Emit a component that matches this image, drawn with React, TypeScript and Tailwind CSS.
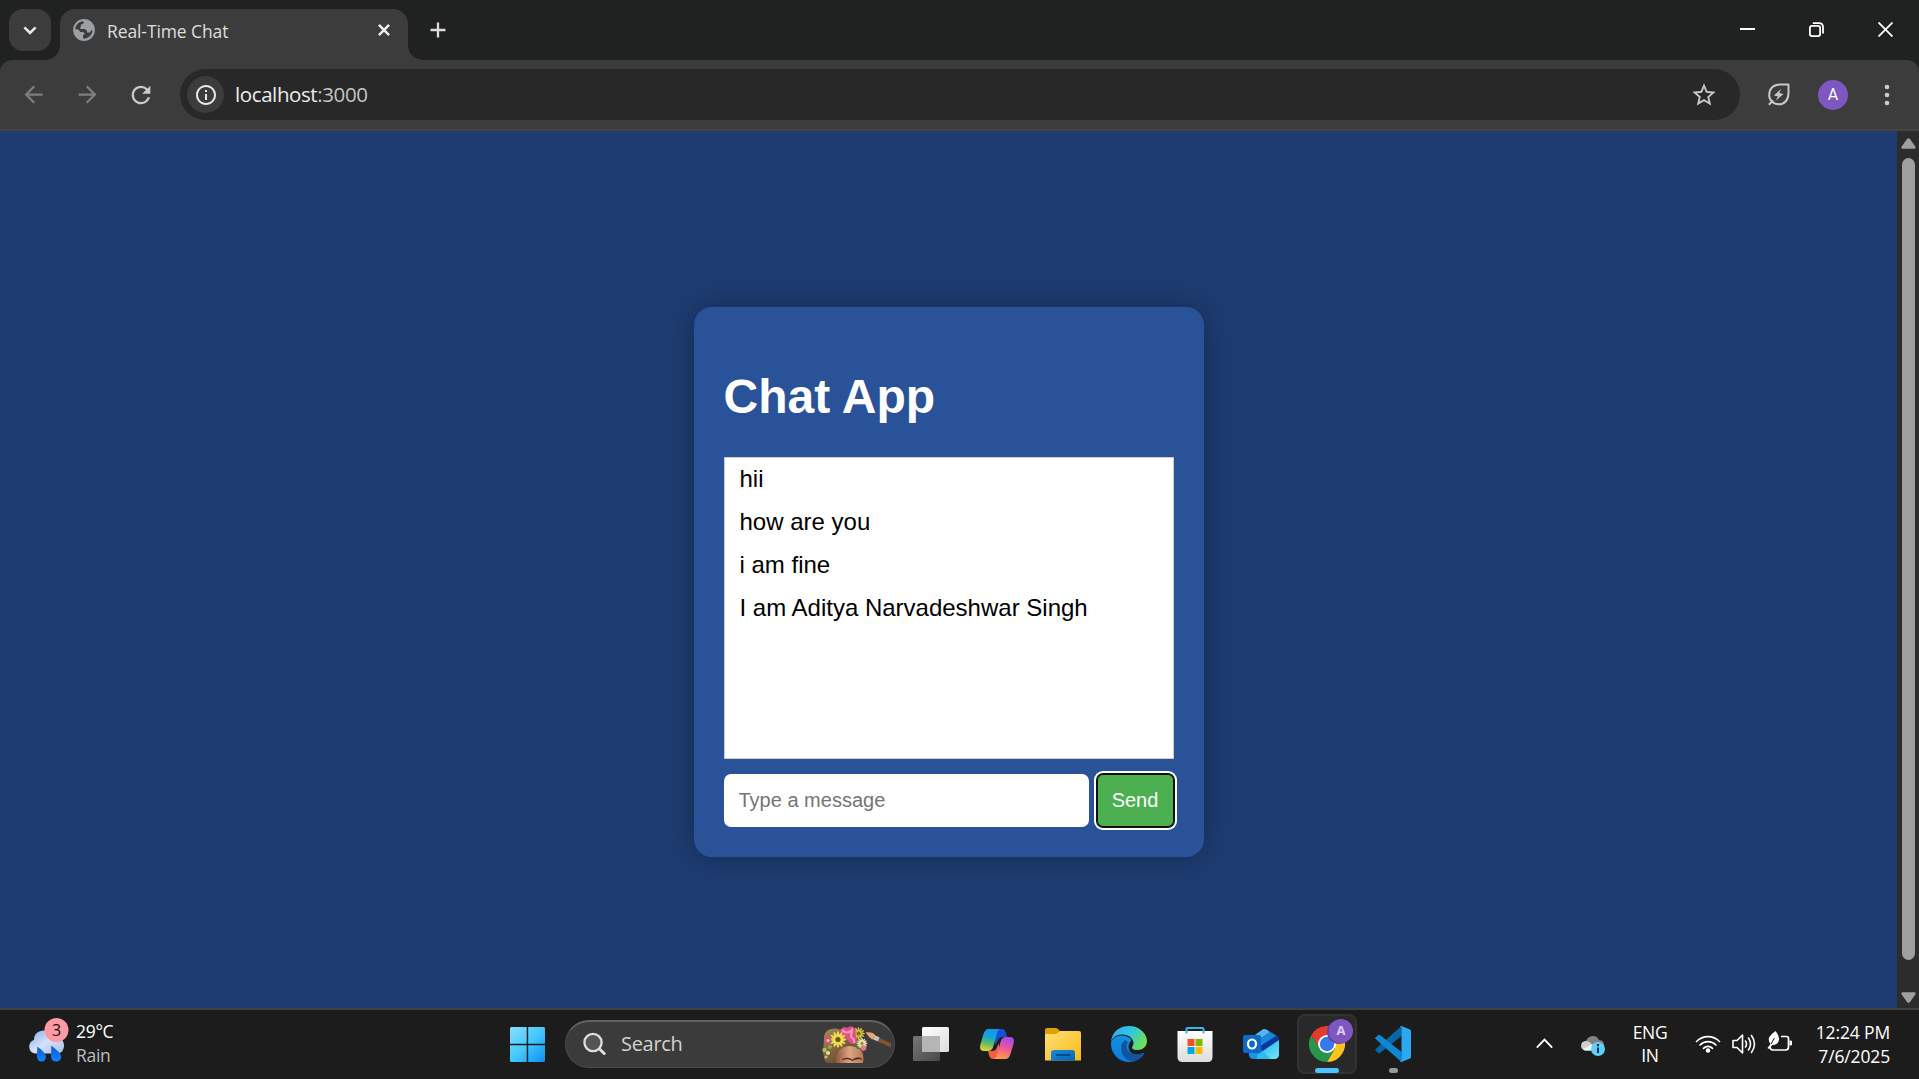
import React from "react";
import type { ReactNode } from "react";
import { MdArrowBack, MdArrowForward, MdInfoOutline, MdRefresh, MdStarOutline } from "react-icons/md";

const messages = ["hii", "how are you", "i am fine", "I am Aditya Narvadeshwar Singh"];

function GlobeIcon() {
  return (
    <svg className="mt-[2px] ml-[2px]" width="22" height="22" viewBox="0 0 22 22">
      <circle cx="11" cy="11" r="10.900" fill="#9aa0a6" />
      <path d="M2.300 10.500C2.300 6.500 5.500 2.800 10 2.300L11 3.500 9.500 5.200H8v2.300L6.800 8.700l1.200 1.300h4l2 1.800v1.700h2.800l1.500-2.200 1.300.5C19 16 15.500 19.300 11.500 19.700l-1.500-.8v-2.400l1.800-1.700-1.600-1.900H7.500L5 10.200Z" fill="#3c3c3c" />
    </svg>
  );
}

function LeafBoltIcon() {
  return (
    <svg className="ml-[28px]" width="22" height="23" viewBox="0 0 22 23" fill="none" stroke="#c8c8c8" strokeWidth="2">
      <path d="M20.500 1.500v8.500c0 7-4 11.300-9.600 11.300-5.700 0-9.700-4-9.700-9.400C1.200 5.500 5.500 1.500 12 1.500Z" strokeLinejoin="round" />
      <path d="m.8 21.800 4.500-4.300" />
      <path d="M13.200 5.800 5.800 12.600l4 .7-2 4.300 7.700-6.700-4.200-.8Z" fill="#c8c8c8" stroke="none" />
    </svg>
  );
}

function TabStrip() {
  return (
    <div className="flex h-[60px] shrink-0 bg-[#202221]">
      <button className="mt-[9px] ml-[9px] flex size-[42px] items-center justify-center rounded-[14px] bg-[#3c3c3c]">
        <svg width="14" height="9" viewBox="0 0 14 9" fill="none" stroke="#e8e8e8" strokeWidth="2.6">
          <path d="M1.4 1.4 7 7l5.6-5.6" />
        </svg>
      </button>
      <div className="relative mt-[9px] ml-[9px] flex h-[51px] w-[348px] items-start rounded-t-[15px] bg-[#3c3c3c] pt-[8px] pl-[11px]">
        <svg className="absolute bottom-0 -left-[15px]" width="15" height="15" fill="#3c3c3c">
          <path d="M15 0v15H0A15 15 0 0 0 15 0Z" />
        </svg>
        <svg className="absolute -right-[15px] bottom-0" width="15" height="15" fill="#3c3c3c">
          <path d="M0 0v15h15A15 15 0 0 1 0 0Z" />
        </svg>
        <GlobeIcon />
        <span className="ml-[12px] h-[30px] text-[17.5px] leading-[29px] tracking-[-0.1px] whitespace-nowrap text-[#dedede]">
          Real-Time Chat
        </span>
        <svg className="mt-[7px] mr-[18px] ml-auto" width="12" height="12" stroke="#f0f0f0" strokeWidth="2.5">
          <path d="m.9.9 10.2 10.2M11.1.9.9 11.1" />
        </svg>
      </div>
      <svg className="mt-[22px] ml-[22px]" width="16" height="16" stroke="#dcdcdc" strokeWidth="2.3">
        <path d="M8 .5v15M.5 8h15" />
      </svg>
      <div className="mt-[22px] mr-[26px] ml-auto flex items-start gap-[54px]">
        <svg width="15" height="15" stroke="#fff" strokeWidth="2">
          <path d="M0 7h15" />
        </svg>
        <svg width="15" height="15" fill="none" stroke="#fff" strokeWidth="1.8">
          <rect x=".9" y="3.9" width="10.2" height="10.2" rx="2" />
          <path d="M3.8 1.2h6.2q4 0 4 4v6.2" />
        </svg>
        <svg width="15" height="15" stroke="#fff" strokeWidth="1.8">
          <path d="m.5.5 14 14M14.5.5l-14 14" />
        </svg>
      </div>
    </div>
  );
}

function Toolbar() {
  return (
    <div className="shrink-0 bg-[#202221]">
      <div className="flex h-[71px] items-center rounded-t-[12px] border-b-2 border-[#444] bg-[#3c3c3c]">
        <div className="ml-[20px] flex items-center gap-[27px]">
          <MdArrowBack size={27} color="#7e7e7e" />
          <MdArrowForward size={27} color="#7e7e7e" />
          <MdRefresh className="-ml-px" size={28} color="#cacaca" />
        </div>
        <div className="ml-[25px] flex h-[51px] w-[1560px] items-center rounded-full bg-[#282828] pr-[22px] pl-[7px]">
          <div className="flex size-[37px] items-center justify-center rounded-full bg-[#3c3c3c]">
            <MdInfoOutline size={24} color="#e8e8e8" />
          </div>
          <span className="-mt-[2px] ml-[11px] text-[20.5px] leading-[28px] tracking-[-0.4px] text-[#ececec]">
            localhost<span className="text-[#c4c4c4]">:3000</span>
          </span>
          <MdStarOutline className="ml-auto" size={28} color="#c8c8c8" />
        </div>
        <LeafBoltIcon />
        <div className="ml-[28px] flex size-[30px] items-center justify-center rounded-full bg-[#7e57c2] font-[Roboto] text-[16px] text-white">
          A
        </div>
        <svg className="ml-[36px]" width="6" height="22" fill="#cacaca">
          <circle cx="3" cy="3" r="2.3" />
          <circle cx="3" cy="11" r="2.3" />
          <circle cx="3" cy="19" r="2.3" />
        </svg>
      </div>
    </div>
  );
}

function ChatCard() {
  return (
    <div className="h-[550px] w-[510px] rounded-[18px] bg-[#2a5298] p-[30px] font-['Liberation_Sans',Arial,sans-serif] shadow-[0_0_30px_rgba(0,0,0,0.3)]">
      <h1 className="pt-[32px] text-[48px] leading-[55px] font-bold text-white">Chat App</h1>
      <ul className="mt-[33px] h-[302px] border border-[#ccc] bg-white px-[15px] pt-[7px] text-[24px] text-black">
        {messages.map((text) => (
          <li key={text} className="mb-[15px] leading-[28px]">
            {text}
          </li>
        ))}
      </ul>
      <div className="mt-[15px] flex h-[53px] gap-[8px] text-[20px]">
        <input
          className="w-[365px] rounded-[7px] bg-white px-[15px] pb-[2px] placeholder:text-[#757575]"
          placeholder="Type a message"
        />
        <button className="w-[77px] rounded-[6px] bg-[#4caf50] pb-[2px] text-white shadow-[inset_0_0_0_1px_#101010,0_0_0_1px_#101010,0_0_0_3px_#fff]">
          Send
        </button>
      </div>
    </div>
  );
}

function Scrollbar() {
  return (
    <div className="flex w-[22px] shrink-0 flex-col items-center bg-[#2c2c2c]">
      <svg className="mt-[7px]" width="15" height="11" fill="#9f9f9f">
        <path d="M6.2.8q1.3-1.2 2.6 0l5.5 7.7q1 2.2-1 2.2H1.7q-2 0-1-2.2Z" />
      </svg>
      <div className="mt-[9px] h-[802px] w-[13px] rounded-full bg-[#9f9f9f]" />
      <svg className="mt-auto mb-[5px]" width="15" height="11" fill="#9f9f9f">
        <path d="M6.2 10.2q1.3 1.2 2.6 0l5.5-7.7q1-2.2-1-2.2H1.7q-2 0-1 2.2Z" />
      </svg>
    </div>
  );
}

function WeatherIcon() {
  return (
    <svg width="42" height="46" viewBox="0 0 42 46">
      <defs>
        <linearGradient id="cloud" x1="0" y1="0" x2="1" y2="1">
          <stop offset="0" stopColor="#86aeea" />
          <stop offset=".5" stopColor="#d5e2f8" />
          <stop offset="1" stopColor="#a3bdec" />
        </linearGradient>
        <linearGradient id="drop" x1="0" y1="0" x2="0" y2="1">
          <stop offset="0" stopColor="#0a5ad0" />
          <stop offset="1" stopColor="#1183ff" />
        </linearGradient>
      </defs>
      <path d="M7 35.5a7 7 0 0 1-1-13.5C6 16 10 12.5 16 12.5c5 0 9 3 10 7 6-1 10 3 10 8s-3 8-7 8Z" fill="url(#cloud)" />
      <path d="M9.300 28.500c5 4 8.700 7 8.700 10.500a4.500 4.500 0 0 1-9 0Z" fill="url(#drop)" />
      <path d="M23.300 27.500c6 5 10 8 10 11.500a5.200 5.200 0 0 1-10.300 0Z" fill="url(#drop)" />
      <circle cx="28.500" cy="12" r="12" fill="#ff99a4" />
      <text x="28.500" y="17.500" textAnchor="middle" fontSize="16" fontFamily="Open Sans" fill="#111">
        3
      </text>
    </svg>
  );
}

function StartIcon() {
  return (
    <svg width="35" height="35" viewBox="0 0 35 35">
      <defs>
        <linearGradient id="win" gradientUnits="userSpaceOnUse" x1="0" y1="0" x2="35" y2="35">
          <stop offset="0" stopColor="#8cdfff" />
          <stop offset=".5" stopColor="#45c8fb" />
          <stop offset="1" stopColor="#0791f8" />
        </linearGradient>
      </defs>
      <path
        fill="url(#win)"
        d="M1.500 0h15.200v16.700H0V1.500Q0 0 1.500 0ZM18.200 0h15.300Q35 0 35 1.500v15.200H18.200ZM0 18.200h16.700V35H1.500Q0 35 0 33.500ZM18.200 18.200H35v15.300q0 1.500-1.500 1.500H18.200Z"
      />
    </svg>
  );
}

function Daisy({ x, y, r, petal, core }: { x: number; y: number; r: number; petal: string; core: string }) {
  return (
    <g transform={`translate(${x} ${y})`}>
      {[0, 30, 60, 90, 120, 150].map((angle) => (
        <ellipse key={angle} rx={r} ry={r * 0.2} fill={petal} transform={`rotate(${angle})`} />
      ))}
      <circle r={r * 0.3} fill={core} />
    </g>
  );
}

function FlowerPortrait() {
  return (
    <svg width="72" height="38" viewBox="0 0 72 38">
      <defs>
        <linearGradient id="skin" x1="0" y1="0" x2="1" y2="0">
          <stop offset="0" stopColor="#8f553d" />
          <stop offset=".5" stopColor="#dba481" />
          <stop offset="1" stopColor="#b97954" />
        </linearGradient>
        <linearGradient id="hair" x1="0" y1="0" x2="1" y2="1">
          <stop offset="0" stopColor="#a98a5a" />
          <stop offset="1" stopColor="#4b331a" />
        </linearGradient>
      </defs>
      <path d="M3 13C2 4 12 0 20 4l20 11 3 12v10H8C2 37 4 31 2 27Z" fill="url(#hair)" />
      <path d="M15 37c-2-9 3-16 13-17 10 0 16 5 14 17Z" fill="url(#skin)" />
      <path d="M21 33.500q6-3 10.500.5 4.500-4 9.500-1-5-1-9.500 1.500-4.500-3-10.500-1Z" fill="#46291a" stroke="#46291a" strokeWidth=".6" />
      <path d="M36 12q8 4 6 10l-6 1-4-7Z" fill="#587536" />
      <Daisy x={37.5} y={7.5} r={6.5} petal="#c9bd3c" core="#8a6a1b" />
      <path d="M19 4q4-5 7-2 5-4 8 1l2 14-6 1-5-6-5-2Z" fill="#e64f87" />
      <path d="M21 4q5 5 10 0l-1 7q4 2 3 6" fill="none" stroke="#ffa4c0" strokeWidth="1.8" />
      <Daisy x={17} y={13.5} r={8.5} petal="#f0dc4c" core="#67510d" />
      <Daisy x={41} y={17.5} r={5.5} petal="#e9e2ae" core="#999632" />
      <circle cx="7" cy="14.500" r="3.300" fill="#dc5579" />
      <circle cx="7" cy="14.500" r="1.300" fill="#ffd2cd" />
      <circle cx="42.500" cy="22" r="2.800" fill="#e37c91" />
      <circle cx="3.500" cy="24" r="2.200" fill="#a7c261" />
      <circle cx="9" cy="21" r="2" fill="#8fae4e" />
      <circle cx="7" cy="27" r="2" fill="#dbe497" />
      <circle cx="5" cy="31" r="1.600" fill="#a8c977" />
      <path d="m57 11 13 6.500v4L55.500 15Z" fill="#805527" />
      <path d="m54 9.500 4.500 1.700-1.500 4-4.500-1.500Z" fill="#c3c4c7" />
      <path d="M44.500 6.500c4-.5 8-.5 10 3l-2 4c-4-.5-5-4-8-7Z" fill="#e8a76c" />
    </svg>
  );
}

function SearchBox() {
  return (
    <div className="-mt-[2px] ml-[20px] flex h-[48px] w-[330px] items-center rounded-full border border-t-2 border-[#4b4b4b] border-t-[#626262] bg-[#3b3b3b] pl-[17px]">
      <svg width="23" height="24" viewBox="0 0 23 24" fill="#555" stroke="#dedede" strokeLinecap="round">
        <path d="m16.500 17 4.700 4.500" strokeWidth="3" />
        <circle cx="10" cy="10.500" r="8.600" strokeWidth="2.300" />
      </svg>
      <span className="ml-[15px] text-[20px] leading-[28px] tracking-[-0.3px] text-[#d2d2d2]">Search</span>
      <div className="mt-[2px] mr-[1px] ml-auto flex">
        <FlowerPortrait />
      </div>
    </div>
  );
}

function TaskViewIcon() {
  return (
    <svg width="36" height="36" viewBox="0 0 36 36">
      <defs>
        <linearGradient id="tvLight" x1="0" y1="0" x2="1" y2="1">
          <stop stopColor="#fff" />
          <stop offset="1" stopColor="#ddd" />
        </linearGradient>
        <linearGradient id="tvDark" x1="0" y1="0" x2="1" y2="1">
          <stop stopColor="#777" />
          <stop offset="1" stopColor="#484848" />
        </linearGradient>
      </defs>
      <rect y="10" width="27" height="25" rx="1.500" fill="url(#tvDark)" />
      <rect x="9" y="1" width="27" height="25" rx="1.500" fill="url(#tvLight)" />
      <path d="M9 10h18v16H10.500Q9 26 9 24.500Z" fill="#b5b5b5" />
    </svg>
  );
}

function CopilotIcon() {
  return (
    <svg width="36" height="36" viewBox="0 0 36 36">
      <defs>
        <linearGradient id="cpA" x1=".5" y1="0" x2=".3" y2="1">
          <stop stopColor="#1793ed" />
          <stop offset=".35" stopColor="#16a4d8" />
          <stop offset=".65" stopColor="#5fbb65" />
          <stop offset="1" stopColor="#e6d72c" />
        </linearGradient>
        <linearGradient id="cpB" x1=".6" y1="0" x2=".3" y2="1">
          <stop stopColor="#a54aec" />
          <stop offset=".45" stopColor="#e8569e" />
          <stop offset="1" stopColor="#ffa13e" />
        </linearGradient>
      </defs>
      <path d="M17 3h6q3 0 4 4l1 4h-4q-4 0-6 5l-2 3V6Z" fill="#1452d2" />
      <path d="M20 33h-6q-3 0-4-4l-1-4h4q4 0 5-4l2-4v14Z" fill="#f75e3b" />
      <path d="M9.500 3H22c-3 0-3.500 2.500-4.500 6l-3 11c-1 4-3 5-6.500 5H5c-4 0-4.500-3-3.500-7l3-10C5.500 5 7 3 9.500 3Z" fill="url(#cpA)" />
      <path d="M26.500 33H14c3 0 3.500-2.500 4.500-6l3-11c1-4 3-5 6.500-5h3c4 0 4.500 3 3.500 7l-3 10c-1 3-2.500 5-5 5Z" fill="url(#cpB)" />
    </svg>
  );
}

function FolderIcon() {
  return (
    <svg width="36" height="36" viewBox="0 0 36 36">
      <defs>
        <linearGradient id="folder" x1="0" y1="0" x2="1" y2="1">
          <stop stopColor="#ffe078" />
          <stop offset="1" stopColor="#f8b914" />
        </linearGradient>
        <linearGradient id="folderBlue" x1="0" y1="0" x2="1" y2="1">
          <stop stopColor="#198ee0" />
          <stop offset="1" stopColor="#0860b2" />
        </linearGradient>
      </defs>
      <path d="M2 2h8.500q1.500 0 2.500 1l3 3v8H0V4q0-2 2-2Z" fill="#dfa006" />
      <path d="M0 8h10.500q1 0 2-1l1.500-1.300q1-.7 2-.7H34q2 0 2 2v27.500H0Z" fill="url(#folder)" />
      <path d="M6 34.500V27q0-3 3-3h18q3 0 3 3v7.500Z" fill="url(#folderBlue)" />
      <path d="M11.500 29h13" stroke="#084a88" strokeWidth="2" strokeLinecap="round" />
    </svg>
  );
}

function EdgeIcon() {
  return (
    <svg width="36" height="36" viewBox="0 0 36 36">
      <defs>
        <linearGradient id="edgeTop" x1="0" y1=".2" x2="1" y2=".6">
          <stop stopColor="#31adf2" />
          <stop offset=".5" stopColor="#31c6df" />
          <stop offset="1" stopColor="#72e252" />
        </linearGradient>
        <linearGradient id="edgeSide" x1=".6" y1="0" x2=".3" y2="1">
          <stop stopColor="#1591df" />
          <stop offset="1" stopColor="#087ee0" />
        </linearGradient>
      </defs>
      <path d="M0 18C0 13 6 8 14 10c5 1 7 4 6 5-5 5-2 13 5 14 4 .500 6-.500 8-1.500C30 33 24 36 18 36 8 36 0 28 0 18Z" fill="url(#edgeSide)" />
      <path d="M14 14c-6 5-5 15 3 20 5 3 12 0 16-6 .700-1-.300-1.700-1.500-1C21 31 12 24 17 16Z" fill="#10549e" />
      <path d="M0 16C1 6 8 0 18 0c11 0 18 8 18 15 0 6-5 9-9 9-6 0-7-2-5-4.500C24 15 20 9 12 8.500 6 8 1.500 11 0 16Z" fill="url(#edgeTop)" />
    </svg>
  );
}

function StoreIcon() {
  return (
    <svg width="36" height="36" viewBox="0 0 36 36">
      <defs>
        <linearGradient id="bag" x1="0" y1="0" x2="0" y2="1">
          <stop stopColor="#fff" />
          <stop offset="1" stopColor="#dcdcdc" />
        </linearGradient>
      </defs>
      <path d="M.5 5h35v26q0 5-5 5h-25q-5 0-5-5Z" fill="url(#bag)" />
      <path d="M9.500 7.500V3q0-1 1-1h15q1 0 1 1v4.500" fill="none" stroke="#35b7ea" strokeWidth="2" />
      <path d="M10.500 13h7v7h-7Z" fill="#f25022" />
      <path d="M18.500 13h7v7h-7Z" fill="#7fba00" />
      <path d="M10.500 21h7v7h-7Z" fill="#00a4ef" />
      <path d="M18.500 21h7v7h-7Z" fill="#ffb900" />
    </svg>
  );
}

function OutlookIcon() {
  return (
    <svg width="36" height="36" viewBox="0 0 36 36">
      <defs>
        <linearGradient id="mail" x1="0" y1="0" x2="1" y2="1">
          <stop stopColor="#23a7e8" />
          <stop offset="1" stopColor="#6cecff" />
        </linearGradient>
      </defs>
      <path d="M6 14 19 4q2-2 5 0l10 6q2 1 2 4v14q0 5-5 5H11q-5 0-5-5Z" fill="#0f6fca" />
      <path d="m9 11 10-7q2-2 5 0l3 2-16 11Z" fill="#55b6ee" />
      <path d="m10 17 17-11 6 4-17 11Z" fill="#1b88dc" />
      <path d="m16 21 17-11q3 1 3 4L20 25Z" fill="#0738a0" />
      <path d="m36 14-22 15v4h17q5 0 5-5Z" fill="url(#mail)" />
      <path d="m6 23 21 10H11q-5 0-5-5Z" fill="#1697e2" />
      <path d="m14 29 6-4 7 8H14Z" fill="#33b9ee" />
      <rect y="9" width="18" height="18" rx="2" fill="#0b69c7" />
      <ellipse cx="9" cy="18" rx="4" ry="4.500" fill="none" stroke="#fff" strokeWidth="2.200" />
    </svg>
  );
}

function ChromeIcon() {
  return (
    <svg width="36" height="36" viewBox="0 0 36 36">
      <path d="M2.400 9A18 18 0 0 1 33.600 9H18L10.200 22.500Z" fill="#e33b2e" />
      <path d="M33.600 9A18 18 0 0 1 18 36l7.800-13.500L18 9Z" fill="#fcc31e" />
      <path d="M18 36A18 18 0 0 1 2.400 9l7.800 13.500h15.600Z" fill="#27964a" />
      <circle cx="18" cy="18" r="9" fill="#fff" />
      <circle cx="18" cy="18" r="7.200" fill="#3579ea" />
    </svg>
  );
}

function CodeIcon() {
  return (
    <svg width="36" height="36" viewBox="0 0 36 36">
      <path d="M26.500 0v10L5 27q-.8.600-1.700 0L.6 24.600q-1-.8 0-1.700Z" fill="#0867aa" />
      <path d="M26.500 36V26L5 9q-.8-.6-1.700 0L.6 11.400q-1 .8 0 1.700Z" fill="#0e88d2" />
      <path d="M26.500 0 35 3.400q1 .5 1 1.600v26q0 1.100-1 1.600L26.500 36q-.8 0-1.500-.7l1.500-1V1.600L25 .6Q25.700 0 26.500 0Z" fill="#2aa8f2" />
    </svg>
  );
}

function TaskCell({ children }: { children: ReactNode }) {
  return <div className="relative flex h-[60px] w-[66px] items-center justify-center">{children}</div>;
}

function Tray() {
  return (
    <div className="-mt-[2px] mr-[29px] ml-auto flex items-center">
      <svg width="17" height="11" fill="none" stroke="#fff" strokeWidth="1.900">
        <path d="m.8 9.700 7.700-8 7.700 8" />
      </svg>
      <svg className="mt-[4px] ml-[27px]" width="26" height="22" viewBox="0 0 26 22">
        <path d="M5 15a5 5 0 0 1 1-9C8 0 17-1 19 5c4 0 5 3 5 5l-8 5Z" fill="#828282" />
        <path d="M5 15.500a4.800 4.800 0 0 1 .5-9.500c3 0 4 1 6 3l3 6.500Z" fill="#d0d0d0" />
        <path d="M3 14.500 12 9l5 6.500H5Z" fill="#f4f4f4" />
        <circle cx="18" cy="14" r="7" fill="#60cdff" />
        <path d="M18 9v2.300M18 12.500v5.500" stroke="#153245" strokeWidth="2" />
      </svg>
      <div className="ml-[25px] w-[38px] text-center text-[17.500px] leading-[23px] tracking-[-0.4px] text-white">
        ENG
        <br />
        IN
      </div>
      <svg className="ml-[26px]" width="26" height="20" viewBox="0 0 26 20" fill="none" stroke="#fff" strokeWidth="1.700" strokeLinecap="round">
        <path d="M1.500 7.500a16 16 0 0 1 23 0M5 11a11.300 11.300 0 0 1 16 0M8.500 14.300a6.400 6.400 0 0 1 9 0" />
        <circle cx="13" cy="16.500" r="1.400" fill="#fff" />
      </svg>
      <svg className="ml-[10px]" width="26" height="22" viewBox="0 0 26 22" fill="none" stroke="#fff" strokeWidth="1.600" strokeLinecap="round" strokeLinejoin="round">
        <path d="M2 7.500h4L11.500 2v18L6 14.500H2ZM14.500 8q2 3 0 6M17.500 5q4 6 0 12M20.500 2.500q6 8.500 0 17" />
      </svg>
      <svg className="-mt-[3px] ml-[10px]" width="26" height="24" viewBox="0 0 26 24">
        <path d="M14 6.500h5.500q2 0 2 2v8.500q0 3-3 3H6q-3 0-3-3" fill="none" stroke="#fff" strokeWidth="1.700" />
        <path d="M22.500 10.500h1q1.500 0 1.500 1.300v2.400q0 1.300-1.500 1.300h-1Z" fill="#fff" />
        <path d="M8.500 1q4 5 3.500 9-1 5-6.500 5l-4 4-1-1 3-4C-1 8 4 5 8.500 1Z" fill="#fff" />
        <path d="M7.500 8 4 14" stroke="#1c1c1c" />
      </svg>
      <div className="ml-[17px] w-[80px] text-right text-[17.500px] leading-[24px] tracking-[-0.150px] whitespace-nowrap text-white">
        12:24 PM
        <br />
        7/6/2025
      </div>
    </div>
  );
}

function Taskbar() {
  return (
    <div className="flex h-[71px] shrink-0 items-center border-t-2 border-[#404040] bg-[#1c1c1c]">
      <div className="flex w-[510px] items-center pl-[28px]">
        <div className="-mt-[7px]">
          <WeatherIcon />
        </div>
        <div className="-mt-[3px] ml-[6px] text-[17.500px] leading-[24px] tracking-[-0.300px] text-white">
          29°C
          <br />
          <span className="text-[#bcbcbc]">Rain</span>
        </div>
      </div>
      <StartIcon />
      <SearchBox />
      <div className="-mt-px ml-[3px] flex">
        <TaskCell>
          <TaskViewIcon />
        </TaskCell>
        <TaskCell>
          <CopilotIcon />
        </TaskCell>
        <TaskCell>
          <FolderIcon />
        </TaskCell>
        <TaskCell>
          <EdgeIcon />
        </TaskCell>
        <TaskCell>
          <StoreIcon />
        </TaskCell>
        <TaskCell>
          <OutlookIcon />
        </TaskCell>
        <TaskCell>
          <div className="flex size-[60px] items-center justify-center rounded-[8px] border-2 border-[#333] bg-[#292929]">
            <ChromeIcon />
          </div>
          <div className="absolute top-[5px] right-[7px] flex size-[24px] items-center justify-center rounded-full bg-[#7e57c2] text-[13px] font-bold text-[#ddd0f2] shadow-[-2px_1px_0_#6942a7]">
            A
          </div>
          <div className="absolute bottom-[1px] h-[5px] w-[24px] rounded-full bg-[#4cc2ff]" />
        </TaskCell>
        <TaskCell>
          <CodeIcon />
          <div className="absolute bottom-[1px] h-[5px] w-[9px] rounded-full bg-[#9a9a9a]" />
        </TaskCell>
      </div>
      <Tray />
    </div>
  );
}

export default function App() {
  return (
    <div className="flex h-screen w-full flex-col overflow-hidden font-['Open_Sans','Noto_Sans',sans-serif]">
      <TabStrip />
      <Toolbar />
      <div className="flex min-h-0 flex-1">
        <main className="flex flex-1 items-start justify-center bg-[#1e3c72] pt-[176px]">
          <ChatCard />
        </main>
        <Scrollbar />
      </div>
      <Taskbar />
    </div>
  );
}
